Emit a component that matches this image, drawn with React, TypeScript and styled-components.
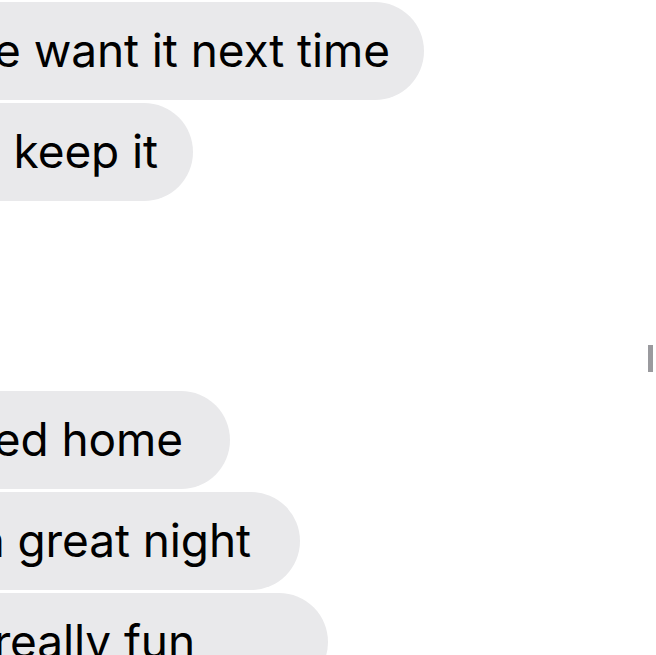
import React from "react";
import styled, { createGlobalStyle } from "styled-components";

const Global = createGlobalStyle`
  html, body { margin: 0; padding: 0; background: #ffffff; overflow: hidden; }
  body { width: 656px; height: 655px; }
`;

const Screen = styled.div`
  position: relative;
  width: 656px;
  height: 655px;
  overflow: hidden;
  background: #ffffff;
  display: flex;
  flex-direction: column;
  padding-top: 2px;
  box-sizing: border-box;
`;

const Group = styled.div<{ $gapAfter?: number }>`
  display: flex;
  flex-direction: column;
  align-items: flex-start;
  gap: 3px;
  margin-bottom: ${(p) => p.$gapAfter ?? 0}px;
`;

const Bubble = styled.div<{ $right: number; $pad: number }>`
  width: ${(p) => p.$right}px;
  height: 98px;
  flex: none;
  box-sizing: border-box;
  background: #e9e9eb;
  border-radius: 0 49px 49px 0;
  display: flex;
  justify-content: flex-end;
  align-items: center;
  padding-right: ${(p) => p.$pad}px;
  overflow: hidden;
`;

const Text = styled.span`
  flex: none;
  white-space: nowrap;
  font-family: Inter, "Liberation Sans", sans-serif;
  font-size: 46px;
  line-height: 1;
  letter-spacing: -0.1px;
  color: #000000;
  padding-bottom: 2px;
`;

const Marker = styled.div`
  position: absolute;
  left: 648px;
  top: 345px;
  width: 5px;
  height: 27px;
  background: #9a9a9e;
`;

export default function App() {
  return (
    <>
      <Global />
      <Screen>
        <Group $gapAfter={190}>
          <Bubble $right={424} $pad={34}>
            <Text>we want it next time</Text>
          </Bubble>
          <Bubble $right={193} $pad={35}>
            <Text>we keep it</Text>
          </Bubble>
        </Group>
        <Group>
          <Bubble $right={230} $pad={47}>
            <Text>arrived home</Text>
          </Bubble>
          <Bubble $right={300} $pad={49}>
            <Text>had a great night</Text>
          </Bubble>
          <Bubble $right={328} $pad={133}>
            <Text>was really fun</Text>
          </Bubble>
        </Group>
        <Marker />
      </Screen>
    </>
  );
}
